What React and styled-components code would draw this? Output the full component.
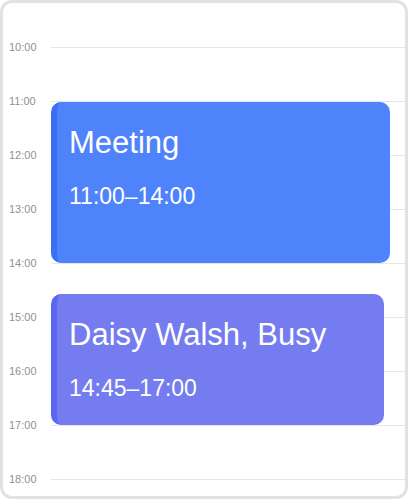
import styled, { createGlobalStyle } from 'styled-components'

const GlobalStyle = createGlobalStyle`
  html, body {
    margin: 0;
    padding: 0;
    background: #ffffff;
    font-family: "Liberation Sans", Arial, sans-serif;
  }
`

const Frame = styled.div`
  box-sizing: border-box;
  width: 408px;
  height: 499px;
  border: 3px solid #e2e2e2;
  border-radius: 12px;
  padding: 17px 0 0 6px;
  overflow: hidden;
  background: #ffffff;
`

const Timeline = styled.div`
  position: relative;
`

const HourRow = styled.div`
  display: grid;
  grid-template-columns: 42px 1fr;
  align-items: center;
  height: 54px;
`

const HourLabel = styled.span`
  font-size: 11px;
  line-height: 14px;
  color: #8d9199;
`

const HourLine = styled.div`
  height: 1px;
  margin-top: 1px;
  background: #e6e6e6;
`

const Event = styled.div`
  position: absolute;
  box-sizing: border-box;
  left: 42px;
  top: ${({ $top }) => $top}px;
  width: ${({ $width }) => $width}px;
  height: ${({ $height }) => $height}px;
  padding: 23px 12px 0 12px;
  border-left: 6px solid ${({ $accent }) => $accent};
  border-radius: 10px;
  background: ${({ $bg }) => $bg};
  color: #ffffff;
`

const EventTitle = styled.div`
  font-size: 31px;
  line-height: 36px;
  margin-bottom: 20px;
  white-space: nowrap;
`

const EventTime = styled.div`
  font-size: 23px;
  line-height: 30px;
`

const hours = ['10:00', '11:00', '12:00', '13:00', '14:00', '15:00', '16:00', '17:00', '18:00']

const events = [
  { id: 1, title: 'Meeting', time: '11:00–14:00', top: 82, height: 161, width: 339, bg: '#4f83fb', accent: '#3a6ff4' },
  { id: 2, title: 'Daisy Walsh, Busy', time: '14:45–17:00', top: 274, height: 131, width: 333, bg: '#757cf0', accent: '#5d66f3' },
]

const App = () => {
  return (
    <>
      <GlobalStyle />
      <Frame>
        <Timeline>
          {hours.map(h => (
            <HourRow key={h}>
              <HourLabel>{h}</HourLabel>
              <HourLine />
            </HourRow>
          ))}
          {events.map(e => (
            <Event key={e.id} $top={e.top} $height={e.height} $width={e.width} $bg={e.bg} $accent={e.accent}>
              <EventTitle>{e.title}</EventTitle>
              <EventTime>{e.time}</EventTime>
            </Event>
          ))}
        </Timeline>
      </Frame>
    </>
  )
}

export default App
